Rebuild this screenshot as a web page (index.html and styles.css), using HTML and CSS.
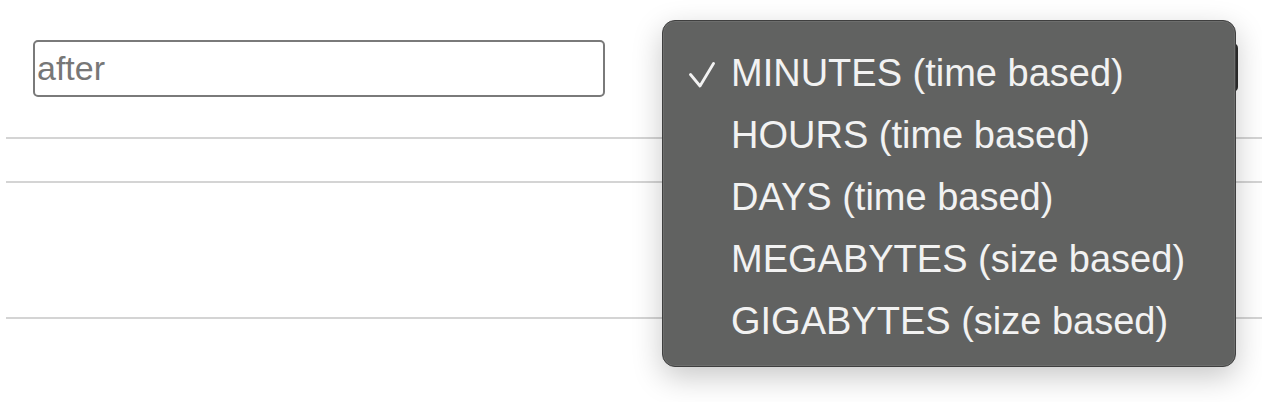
FILE: index.html
```html
<!DOCTYPE html>
<html>
<head>
<meta charset="utf-8">
<link rel="stylesheet" href="styles.css">
</head>
<body>
<div class="page">
  <div class="row row-first">
    <div class="field-cell">
      <input class="text-input" type="text" value="after">
    </div>
    <div class="select-cell">
      <div class="select-box"></div>
      <ul class="menu">
        <li class="menu-item">
          <span class="check">
            <svg width="26" height="26" viewBox="0 0 26 26"><polyline points="1.5,12.5 11,24 24.5,1.5" fill="none" stroke="#f2f2f2" stroke-width="2.8" stroke-linecap="round" stroke-linejoin="round"/></svg>
          </span>
          <span class="label">MINUTES (time based)</span>
        </li>
        <li class="menu-item"><span class="check"></span><span class="label">HOURS (time based)</span></li>
        <li class="menu-item"><span class="check"></span><span class="label">DAYS (time based)</span></li>
        <li class="menu-item"><span class="check"></span><span class="label">MEGABYTES (size based)</span></li>
        <li class="menu-item"><span class="check"></span><span class="label">GIGABYTES (size based)</span></li>
      </ul>
    </div>
  </div>
  <div class="row row-second"></div>
  <div class="row row-third"></div>
</div>
</body>
</html>
```

FILE: styles.css
```css
html, body {
  margin: 0;
  padding: 0;
  background: #ffffff;
}

body {
  width: 1262px;
  height: 402px;
  overflow: hidden;
  font-family: "Liberation Sans", Arial, sans-serif;
}

.page {
  padding-left: 6px;
}

.row {
  border-bottom: 2px solid #d4d4d4;
  box-sizing: border-box;
}

.row-first {
  height: 139px;
  display: flex;
  align-items: flex-start;
}

.row-second {
  height: 44px;
}

.row-third {
  height: 136px;
}

.field-cell {
  padding-left: 27px;
  padding-top: 40px;
}

.text-input {
  box-sizing: border-box;
  width: 572px;
  height: 57px;
  margin: 0;
  border: 2px solid #7a7a7a;
  border-radius: 5px;
  padding: 0 2px;
  font-family: "Liberation Sans", Arial, sans-serif;
  font-size: 34px;
  color: #777777;
  background: #ffffff;
  outline: none;
}

.select-cell {
  position: relative;
  margin-left: 57px;
  padding-top: 43px;
}

.select-box {
  width: 576px;
  height: 49px;
  box-sizing: border-box;
  border: 3px solid #2e2e2e;
  border-radius: 5px;
  background: #3c3c3c;
}

.menu {
  position: absolute;
  left: 0;
  top: 20px;
  width: 574px;
  height: 347px;
  box-sizing: border-box;
  margin: 0;
  padding: 21px 0 15px 0;
  list-style: none;
  background: #616261;
  border: 1px solid #3f3f3f;
  border-radius: 13px;
  box-shadow: inset 0 0 0 1px rgba(255, 255, 255, 0.08), 0 10px 30px rgba(0, 0, 0, 0.22);
}

.menu-item {
  display: flex;
  align-items: center;
  height: 62px;
  padding-left: 26px;
  color: #f2f2f2;
  font-size: 38px;
  line-height: 62px;
  white-space: nowrap;
}

.check {
  width: 42px;
  flex: none;
  display: flex;
  align-items: center;
  padding-top: 4px;
}

.check svg {
  display: block;
}
```
